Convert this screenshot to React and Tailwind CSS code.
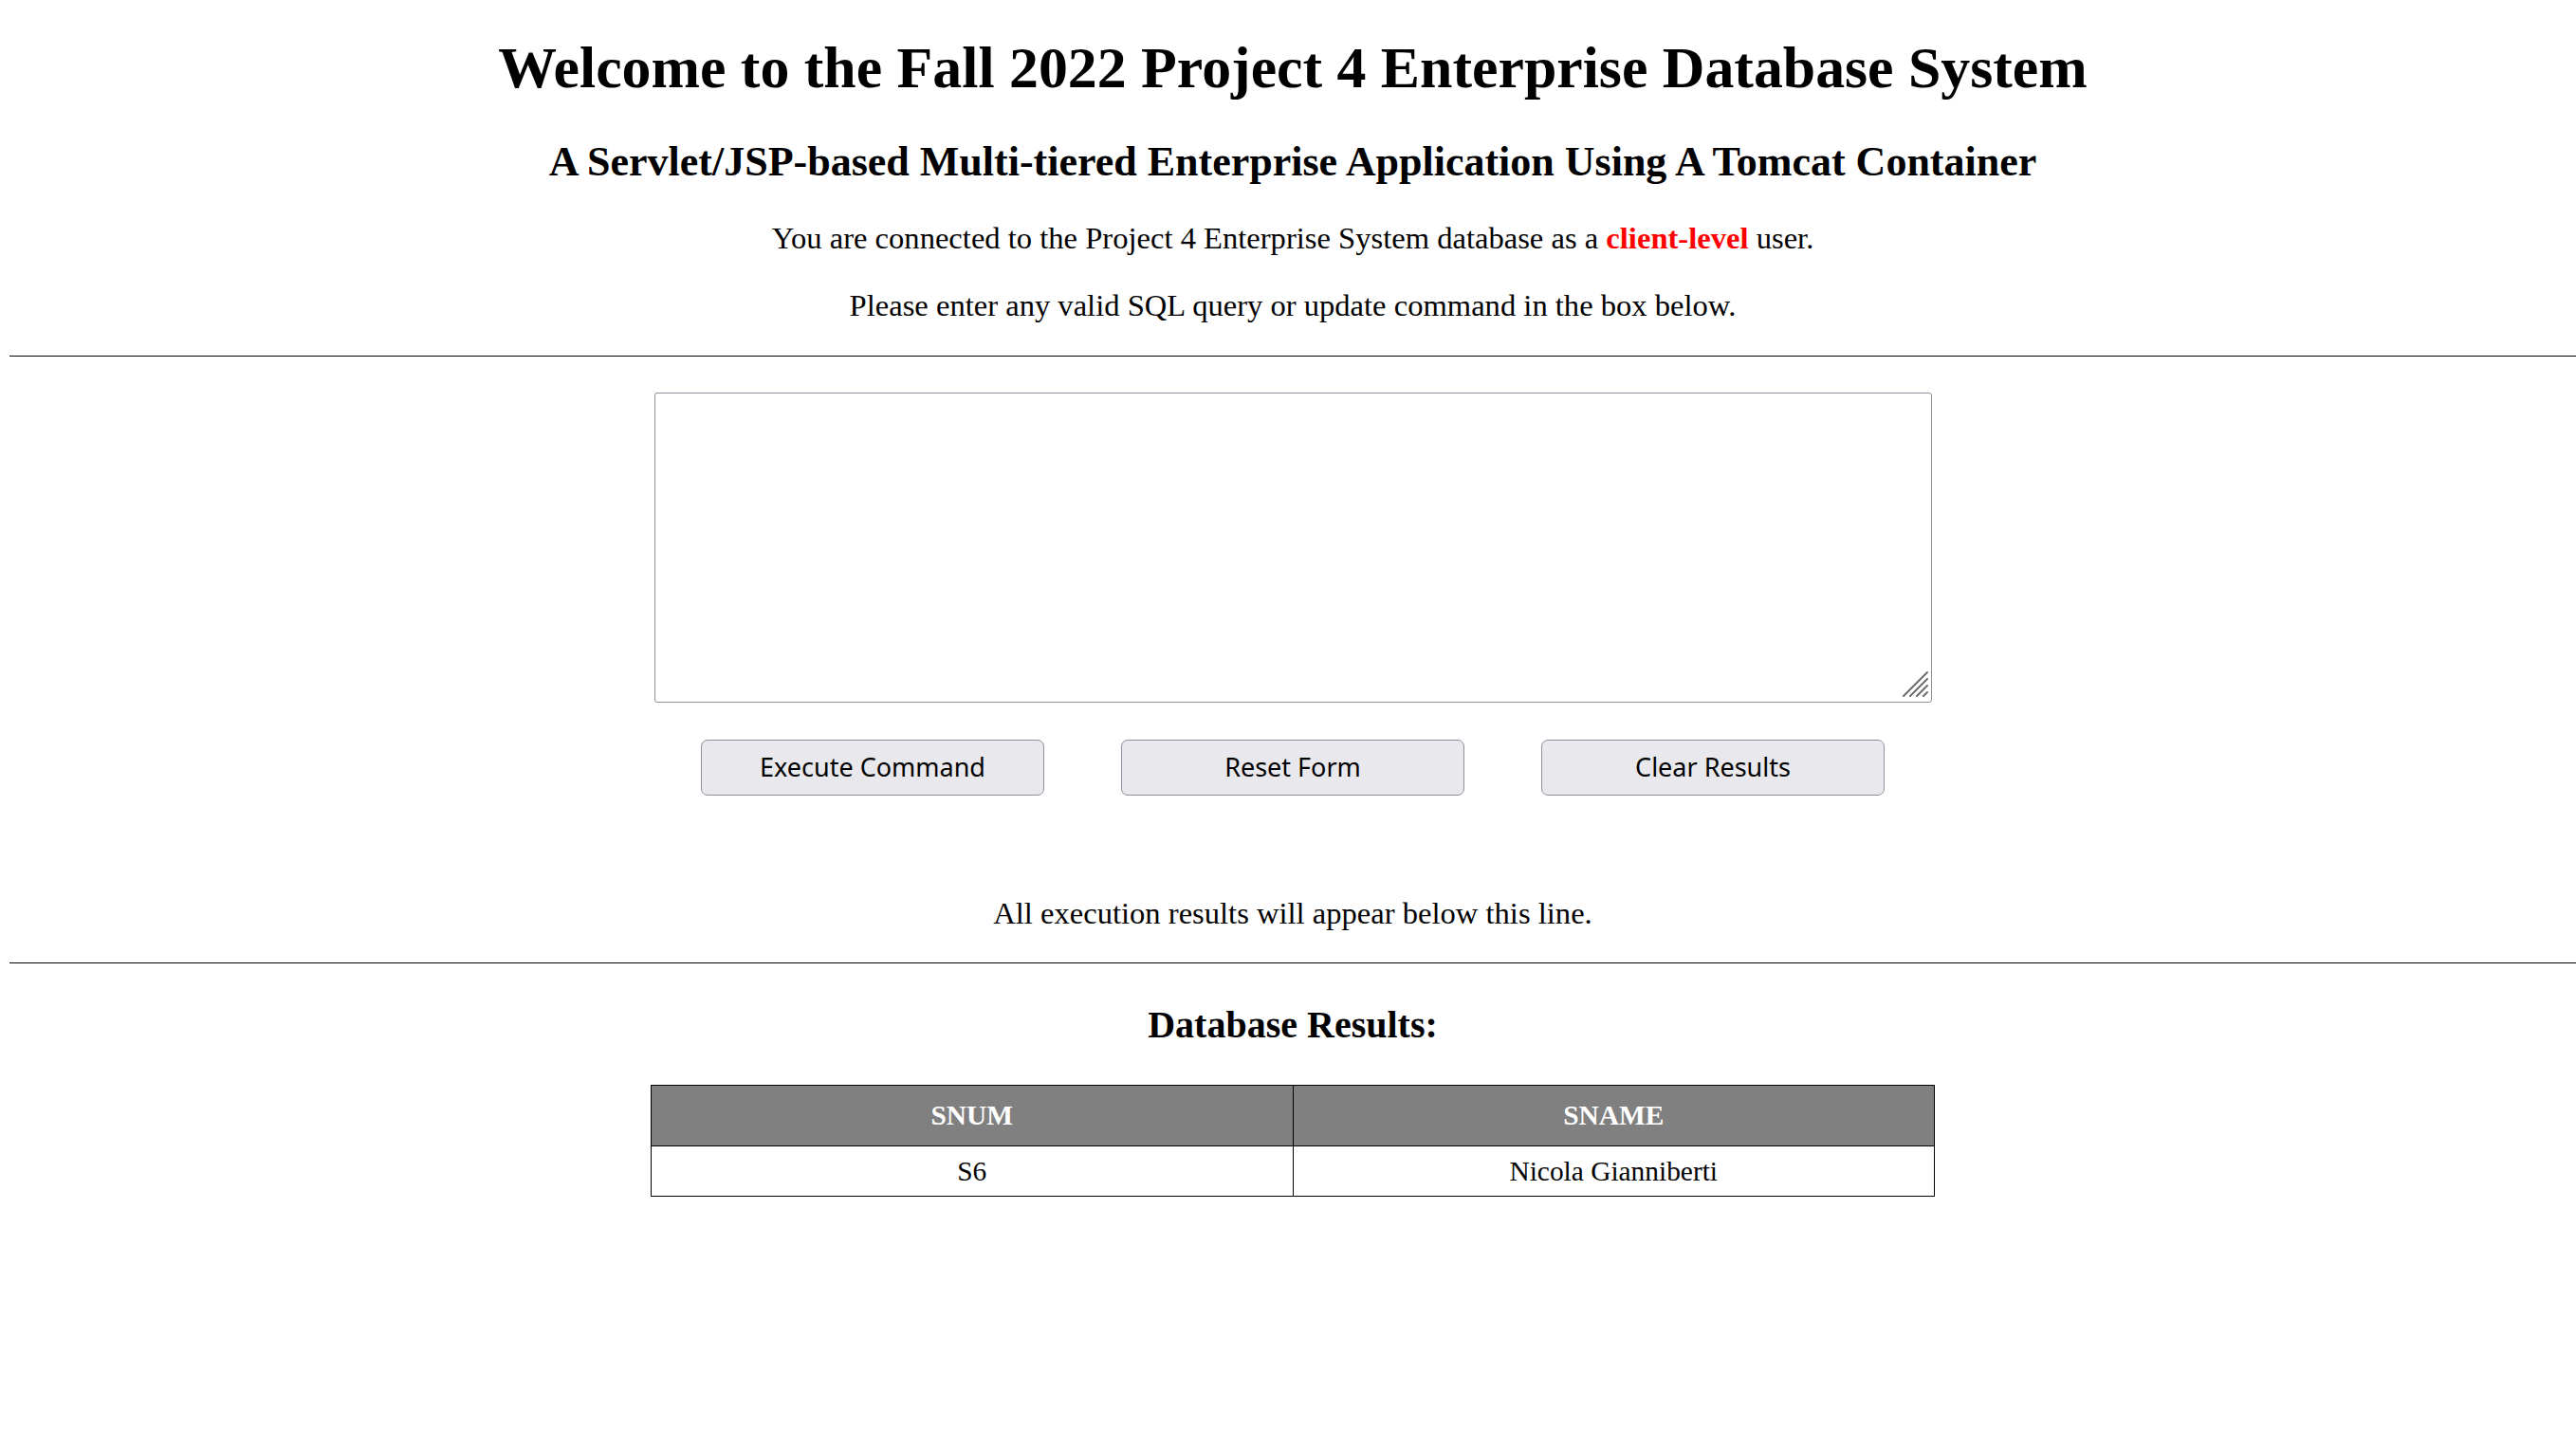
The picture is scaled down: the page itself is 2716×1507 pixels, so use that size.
export default function App() {
  return (
    <div
      className="min-h-screen bg-white pl-[10px] text-black"
      style={{ fontFamily: '"Liberation Serif", "Times New Roman", serif' }}
    >
      <div className="flex flex-col items-center text-center">
        <h1 className="mt-[39px] text-[61.8px] font-bold leading-[64px]">
          Welcome to the Fall 2022 Project 4 Enterprise Database System
        </h1>
        <h2 className="mt-[44px] text-[44px] font-bold leading-[48px]">
          A Servlet/JSP-based Multi-tiered Enterprise Application Using A Tomcat Container
        </h2>
        <p className="mt-[40px] text-[32.6px] leading-[32px]">
          You are connected to the Project 4 Enterprise System database as a{" "}
          <span className="font-bold text-[#ff0000]">client-level</span> user.
        </p>
        <p className="mt-[39px] text-[32.6px] leading-[32px]">
          Please enter any valid SQL query or update command in the box below.
        </p>
      </div>

      <hr className="mt-[37px] border-t border-black" />

      {/* Form */}
      <form className="flex flex-col items-center">
        <div className="relative mt-[38px]">
          <textarea
            className="block h-[327px] w-[1347px] resize-none rounded-[3px] border border-[#8f8f9d] bg-white p-2 text-[28px] outline-none"
            name="sqlStatement"
          ></textarea>
          <svg
            className="pointer-events-none absolute bottom-[5px] right-[3px]"
            width="30"
            height="30"
            viewBox="0 0 30 30"
          >
            <g stroke="#6b6b6b" strokeWidth="2" strokeLinecap="round">
              <line x1="3" y1="28" x2="28" y2="3" />
              <line x1="10" y1="28" x2="28" y2="10" />
              <line x1="17" y1="28" x2="28" y2="17" />
              <line x1="24" y1="28" x2="28" y2="24" />
            </g>
          </svg>
        </div>
        <div
          className="mt-[39px] flex gap-[81px]"
          style={{ fontFamily: '"Noto Sans", "Open Sans", sans-serif' }}
        >
          <button type="button" className="h-[59px] w-[362px] rounded-[7px] border border-[#8f8f9d] bg-[#e9e9ed] text-[27px] text-black">
            Execute Command
          </button>
          <button type="reset" className="h-[59px] w-[362px] rounded-[7px] border border-[#8f8f9d] bg-[#e9e9ed] text-[27px] text-black">
            Reset Form
          </button>
          <button type="button" className="h-[59px] w-[362px] rounded-[7px] border border-[#8f8f9d] bg-[#e9e9ed] text-[27px] text-black">
            Clear Results
          </button>
        </div>
      </form>

      <p className="mt-[108px] text-center text-[32.6px] leading-[32px]">
        All execution results will appear below this line.
      </p>

      <hr className="mt-[36px] border-t border-black" />

      {/* Results */}
      <div className="flex flex-col items-center">
        <h3 className="mt-[46px] text-[40px] font-bold leading-[38px]">Database Results:</h3>
        <table className="mt-[44px] w-[1354px] border-collapse border border-black text-[29.4px]">
          <thead>
            <tr className="h-[64px] bg-[#808080] text-white">
              <th className="w-1/2 border border-black font-bold">SNUM</th>
              <th className="w-1/2 border border-black font-bold">SNAME</th>
            </tr>
          </thead>
          <tbody>
            <tr className="h-[53px]">
              <td className="border border-black text-center">S6</td>
              <td className="border border-black text-center">Nicola Gianniberti</td>
            </tr>
          </tbody>
        </table>
      </div>
    </div>
  );
}
